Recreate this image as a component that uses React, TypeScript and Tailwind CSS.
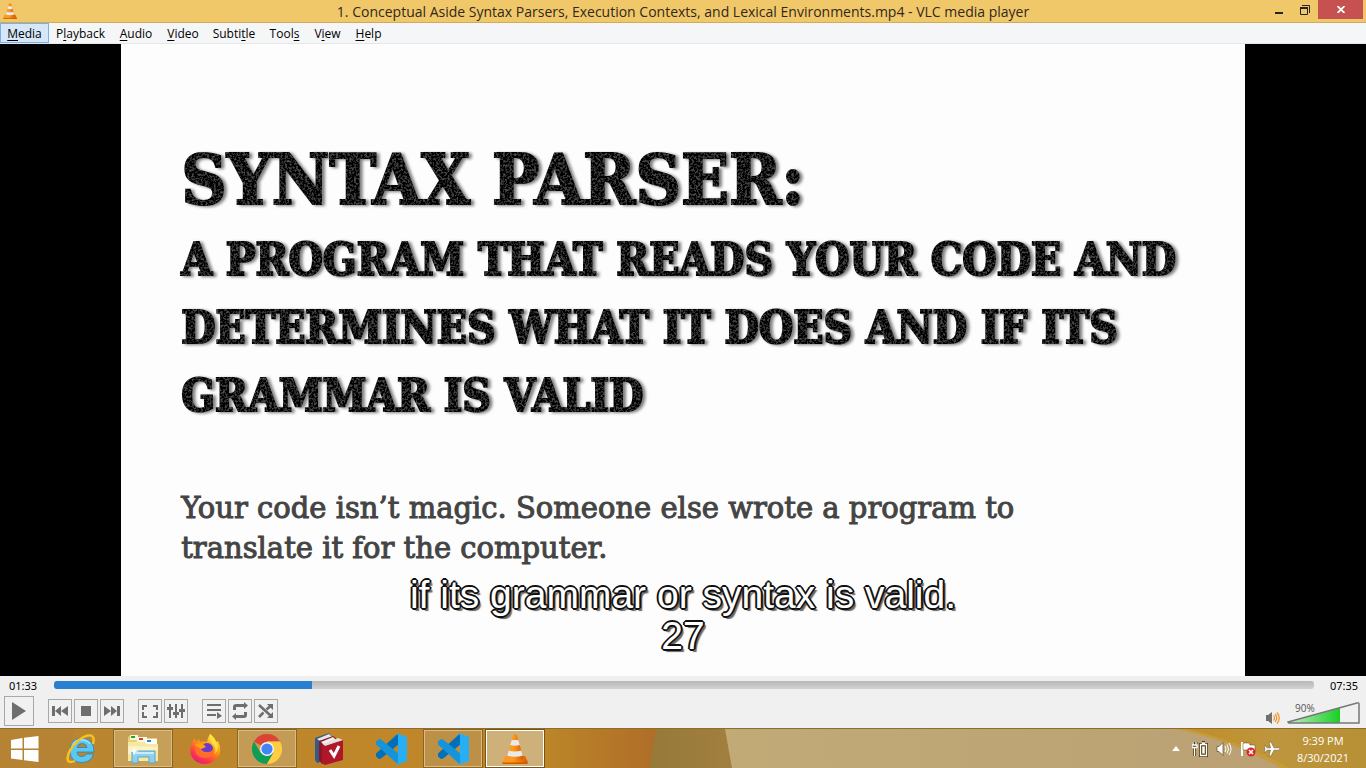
import type { ReactNode } from "react";

const menus = [
  { before: "", key: "M", after: "edia", width: "w-[49px]" },
  { before: "P", key: "l", after: "ayback", width: "w-[63px]" },
  { before: "", key: "A", after: "udio", width: "w-[48px]" },
  { before: "", key: "V", after: "ideo", width: "w-[46px]" },
  { before: "Subti", key: "t", after: "le", width: "w-[56px]" },
  { before: "Tool", key: "s", after: "", width: "w-[45px]" },
  { before: "V", key: "i", after: "ew", width: "w-[41px]" },
  { before: "", key: "H", after: "elp", width: "w-[41px]" },
];

function Cone({ className }: { className: string }) {
  return (
    <svg viewBox="0 0 26 30" className={className} aria-hidden="true">
      <defs>
        <linearGradient id="cone" x1="0" x2="1">
          <stop offset="0" stopColor="#f79a2a" />
          <stop offset=".4" stopColor="#ff9a1c" />
          <stop offset="1" stopColor="#d85a00" />
        </linearGradient>
      </defs>
      <path d="M3 22h20l3 6.5-1 1.500H1l-1-1.500z" fill="url(#cone)" />
      <path d="M0 28.500h26l-1 1.500H1z" fill="#c95c00" />
      <path d="M11 1q2-1.500 4 0l6.500 24q-8.500 4-17 0z" fill="url(#cone)" />
      <path d="M9.700 6h6.600l1.500 5q-4.800 1.500-9.600 0z" fill="#e9eaec" />
      <path d="M6.800 16.500q6.200 2 12.400 0l1.500 5q-7.700 2.500-15.400 0z" fill="#e9eaec" />
    </svg>
  );
}

function Explorer() {
  return (
    <svg viewBox="0 0 32 30" className="h-[30px] w-8">
      <path d="M1 4q0-2 2-2h7l2 2h18v23H1z" fill="#e9cf72" />
      <path d="M3 1h8v5H3z" fill="#f8f4d8" />
      <path d="M4 2h4v2H4z" fill="#2ca02c" />
      <path d="M10 3h10v5H10z" fill="#fbf8e4" />
      <path d="M12 4h4v2h-4z" fill="#d8402c" />
      <path d="M18 5h12v5H18z" fill="#fff" />
      <path d="M20 6h4v2h-4z" fill="#2488e0" />
      <path d="M1 8h16l3 2h11v17H1z" fill="#f6e8a4" />
      <path d="M1 12l30 1v3L1 20z" fill="#fbf3c4" />
      <path d="M5 17h23v12h-6v-6H11v6H5z" fill="#8fd0ee" stroke="#5ba4c8" />
      <path d="M6 18h21v2H6z" fill="#c8ecfb" />
      <path d="M7 12l1 4 4 1-4 1-1 4-1-4-4-1 4-1z" fill="#fff" />
    </svg>
  );
}

function Ie() {
  return (
    <svg viewBox="0 0 32 32" className="size-8">
      <path
        d="M29 19H12q.5 4.500 5 4.500 3 0 4.500-2.500h7q-2.500 8.500-11.500 8.500Q5 29.500 5 17.500 5 5.500 17 5.500 29 5.500 29 19zM12 14.500h10q-.6-4-4.800-4-4.300 0-5.200 4z"
        fill="#5cc8f2"
        stroke="#1c86c4"
        strokeWidth=".8"
      />
      <path d="M7 14q2-7 9-7.200 6 0 9 4" fill="none" stroke="#9be3fb" strokeWidth="1.500" />
      <path d="M28 11q2-7-2-8.500-5-1-12.500 5Q3 17 2.500 25q0 6 7.500 3" fill="none" stroke="#f6c324" strokeWidth="2.400" />
    </svg>
  );
}

function Firefox() {
  return (
    <svg viewBox="0 0 32 32" className="size-8">
      <defs>
        <linearGradient id="fire" x1=".8" y1="0" x2=".2" y2="1">
          <stop offset="0" stopColor="#fff44f" />
          <stop offset=".4" stopColor="#ff980e" />
          <stop offset=".75" stopColor="#ff3647" />
          <stop offset="1" stopColor="#e31587" />
        </linearGradient>
      </defs>
      <path d="M21 1q5 4 6 8l2-1q5 11-1 17-5 6-12 6-9 0-13-7Q-1 16 4 8l2-3 1 4 3-3 1 3q4-1 7 0 1-5 3-8z" fill="url(#fire)" />
      <circle cx="16.500" cy="17.500" r="7" fill="#7543d5" />
      <path d="M8 11q6-1 9 3l-5 2q2 3 6 3 5 0 7-4 0 10-9 10T6 17q0-3 2-6z" fill="#ff6d2d" />
      <path d="M12 16q2 3 6 3 5 0 6-4-1-4-5-5-5 0-3 4z" fill="#6a3bc9" />
      <path d="M5 12q5-3 9-1l3 3-5 2-3-2z" fill="#ffa016" />
      <path d="M21 1q-1 6 2 9 5 5 3 11 5-6 1-12-1-4-6-8z" fill="#ffe13a" />
    </svg>
  );
}

function Chrome() {
  return (
    <svg viewBox="0 0 30 30" className="size-[30px]">
      <path d="M15 15L2 7.500A15 15 0 0 1 28 7.500H15z" fill="#db4437" />
      <path d="M2 7.500A15 15 0 0 0 15 30l6.500-11.200L8.500 18.800z" fill="#0f9d58" />
      <path d="M28 7.500A15 15 0 0 1 15 30l6.500-11.200L15 7.500z" fill="#ffcd40" />
      <circle cx="15" cy="15" r="7" fill="#f4f4f4" />
      <circle cx="15" cy="15" r="5.600" fill="#4285f4" />
    </svg>
  );
}

function Books() {
  return (
    <svg viewBox="0 0 30 32" className="h-8 w-[30px]">
      <path d="M1 5l14-5 3 4v21L3 30l-2-3z" fill="#365a87" />
      <path d="M3 6l12-5 3 3L6 8z" fill="#e7e7e7" />
      <path d="M5 8l14-5 5 4v20L8 31l-3-4z" fill="#8c1622" />
      <path d="M7 9l12-5 3 3-12 5z" fill="#f0f0f0" />
      <path d="M8 12l3 1L29 7v20L11 32l-3-2z" fill="#b0172a" />
      <path d="M9 11l15-6 5 2-18 6z" fill="#e6dedc" />
      <path d="M16 17l4 6 5-10" fill="none" stroke="#fff" strokeWidth="3" />
    </svg>
  );
}

function Code() {
  return (
    <svg viewBox="0 0 32 32" className="size-8">
      <path d="M23 0.500L1 20.500v3L4 26l2-.5L24 11z" fill="#0070b8" />
      <path d="M23 31.500L1 11.500v-3L4 6l2 .5L24 21z" fill="#1594dc" />
      <path d="M23 .5L32 4v24l-9 3.500q-1 .5-2-.5 2 0 2-2V3q0-2-2-2 1-1 2-.5z" fill="#28aef5" />
    </svg>
  );
}

function Windows() {
  return (
    <svg viewBox="0 0 28 26" className="h-[26px] w-7" fill="#fff">
      <path d="M0 4l11.500-2v10.500H0zM13 1.700L27.500 0v12.500H13zM0 14h11.500v10L0 22.500zM13 14h14.500v12L13 24.300z" />
    </svg>
  );
}

const tasks: { name: string; icon: ReactNode; style: string }[] = [
  { name: "Internet Explorer", icon: <Ie />, style: "border-transparent" },
  { name: "File Explorer", icon: <Explorer />, style: "border-[#d9bb86] bg-[#c69f58] outline outline-[#8c641f]" },
  { name: "Firefox", icon: <Firefox />, style: "border-transparent" },
  { name: "Google Chrome", icon: <Chrome />, style: "border-[#d9bb86] bg-[#c39b55] outline outline-[#8c641f]" },
  { name: "Dictionary", icon: <Books />, style: "border-transparent" },
  { name: "Visual Studio Code", icon: <Code />, style: "border-transparent" },
  { name: "Visual Studio Code project", icon: <Code />, style: "border-[#d9bb86] bg-[#bc9147] outline outline-[#8c641f]" },
  { name: "VLC media player", icon: <Cone className="h-[30px] w-[26px]" />, style: "border-white bg-[#ceb07a] outline outline-[#79521a]" },
];

const groups: { name: string; icon: ReactNode }[][] = [
  [
    { name: "Previous", icon: <path d="M4 7h3v10H4zM13 7v10l-6-5zM20 7v10l-7-5z" /> },
    { name: "Stop", icon: <path d="M7 7h10v10H7z" /> },
    { name: "Next", icon: <path d="M4 7l7 5-7 5zM11 7l6 5-6 5zM17 7h3v10h-3z" /> },
  ],
  [
    { name: "Fullscreen", icon: <path d="M4 6h5v2H6v3H4zM15 6h5v5h-2V8h-3zM4 13h2v4h3v2H4zM18 13h2v6h-5v-2h3z" /> },
    { name: "Extended settings", icon: <path d="M5 5h2v3h2v3H7v8H5v-8H3V8h2zM11 5h2v8h2v3h-2v3h-2v-3H9v-3h2zM17 5h2v5h2v3h-2v6h-2v-6h-2v-3h2z" /> },
  ],
  [
    { name: "Playlist", icon: <path d="M5 5h14v2H5zM5 10h14v2H5zM5 15h9v2H5zM15 13l5 4-5 3z" /> },
    { name: "Loop", icon: <path d="M5 11V8q0-3 3-3h8V3l4 3.500-4 3.500V8H8v3zM19 13v3q0 3-3 3H8v2l-4-3.500L8 14v2h8v-3z" /> },
    { name: "Random", icon: <><path d="M5 6l12 11M5 18l4.500-4.500M12.500 10.500L17 6.500" fill="none" stroke="#6e6e6e" strokeWidth="2.500" /><path d="M13 5h6v6zM19 13v6h-6z" /></> },
  ],
];

const control = "flex items-center justify-center border border-[#a8a8a8] bg-[#f1f1f1]";
const slab = "font-bold [font-family:'DejaVu_Serif_Condensed','DejaVu_Serif',serif]";

export default function App() {
  return (
    <div className="flex h-screen flex-col overflow-hidden bg-[#f0f0f0] text-black [font-family:'Open_Sans','Noto_Sans',sans-serif]">
      <header className="flex h-[23px] shrink-0 border-b border-[#cfab5c] bg-[#f0c869]">
        <div className="w-[120px] pt-[3px] pl-[3px]">
          <Cone className="h-4 w-[14px]" />
        </div>
        <h1 className="flex-1 truncate text-center text-[14px] leading-6 text-[#30291b]">
          1. Conceptual Aside Syntax Parsers, Execution Contexts, and Lexical Environments.mp4 - VLC media player
        </h1>
        <div className="flex w-[120px] items-start justify-end">
          <button aria-label="Minimize" className="flex h-[19px] w-[26px] items-center justify-center">
            <svg viewBox="0 0 10 10" className="size-[10px]"><path d="M1 7h8v2H1z" fill="#242424" /></svg>
          </button>
          <button aria-label="Restore" className="flex h-[19px] w-[26px] items-center justify-center">
            <svg viewBox="0 0 10 10" className="size-[10px]" fill="none" stroke="#242424">
              <path d="M2 .5h7.500V8M.5 3v6.500h7V3M0 3h8" /><path d="M0 3h8" strokeWidth="2" />
            </svg>
          </button>
          <button aria-label="Close" className="mr-[3px] flex h-[19px] w-[45px] items-center justify-center bg-[#c75050]">
            <svg viewBox="0 0 8 7" className="h-[7px] w-2" stroke="#fff" strokeWidth="1.800"><path d="M.5 0l7 7M7.500 0l-7 7" /></svg>
          </button>
        </div>
      </header>

      <nav className="flex h-[21px] shrink-0 border-b border-[#e6e6e6] bg-[#f5f6f8]">
        {menus.map((m, i) => (
          <button
            key={m.before + m.key + m.after}
            className={`${m.width} h-5 border text-center text-[12px] leading-[20px] ${i === 0 ? "border-[#7ab0e6] bg-[#d5e7f8]" : "border-transparent"}`}
          >
            {m.before}<span className="underline underline-offset-2">{m.key}</span>{m.after}
          </button>
        ))}
      </nav>

      <main className="flex min-h-0 flex-1 justify-center bg-black">
        <section className="relative aspect-video h-full min-w-0 bg-[#fdfdfd] px-[60px] pt-[90px]">
          <svg width="0" height="0" className="absolute" aria-hidden="true">
            <filter id="worn" x="-2%" y="-5%" width="104%" height="110%">
              <feTurbulence type="fractalNoise" baseFrequency=".45" numOctaves="3" seed="4" result="noise" />
              <feColorMatrix in="noise" values="0 0 0 0 .08  0 0 0 0 .08  0 0 0 0 .08  3 0 0 0 -1.400" result="specks" />
              <feComposite in="specks" in2="SourceGraphic" operator="in" result="worn" />
              <feDropShadow in="SourceGraphic" dx="3" dy="1" stdDeviation="1.500" floodOpacity=".5" result="letters" />
              <feMerge><feMergeNode in="letters" /><feMergeNode in="worn" /></feMerge>
            </filter>
          </svg>
          <h2 className={`${slab} whitespace-nowrap text-black [-webkit-text-stroke:2px_#000] [filter:url(#worn)]`}>
            <span className="block text-[70px] leading-[92px]">SYNTAX PARSER:</span>
            <span className="block text-[44px] leading-[68px]">A PROGRAM THAT READS YOUR CODE AND</span>
            <span className="block text-[44px] leading-[68px]">DETERMINES WHAT IT DOES AND IF ITS</span>
            <span className="block text-[44px] leading-[68px]">GRAMMAR IS VALID</span>
          </h2>
          <p className="mt-[58px] whitespace-nowrap text-[29px] leading-10 text-[#444] [-webkit-text-stroke:1px_#444] [font-family:'DejaVu_Serif',serif]">
            Your code isn’t magic. Someone else wrote a program to<br />translate it for the computer.
          </p>
          <p className="absolute inset-x-0 bottom-5 text-center text-[39px] leading-[41px] text-white [font-family:'Liberation_Sans',sans-serif] [text-shadow:2px_0_#111,-2px_0_#111,0_2px_#111,0_-2px_#111,1px_1px_#111,-1px_1px_#111,1px_-1px_#111,-1px_-1px_#111,3px_3px_1px_#666]">
            if its grammar or syntax is valid.<br />27
          </p>
        </section>
      </main>

      <section aria-label="Playback controls" className="h-[52px] shrink-0 bg-[#f0f0f0]">
        <div className="flex h-5 items-center gap-4 pr-[7px] pl-[9px] text-[11px]">
          <span className="w-[29px] font-['Noto_Sans']">01:33</span>
          <input
            type="range"
            aria-label="Position"
            min="0"
            max="455"
            defaultValue="93"
            className="mb-[2px] h-2 min-w-0 flex-1 appearance-none rounded-[3px] bg-[linear-gradient(90deg,#2980d1_20.500%,transparent_20.500%),linear-gradient(#b8b8b8,#d2d2d2)] [&::-webkit-slider-thumb]:appearance-none [&::-webkit-slider-thumb]:opacity-0"
          />
          <span className="w-[29px] font-['Noto_Sans']">07:35</span>
        </div>
        <div className="flex h-[30px] items-center pl-1">
          <button aria-label="Play" className={`${control} size-[30px]`}>
            <svg viewBox="0 0 14 18" className="h-[18px] w-[14px]"><path d="M0 0l14 9-14 9z" fill="#6e6e6e" /></svg>
          </button>
          <div className="ml-[14px] flex gap-[14px]">
            {groups.map((g) => (
              <div key={g[0].name} className="flex gap-[2px]">
                {g.map((b) => (
                  <button key={b.name} aria-label={b.name} className={`${control} size-6`}>
                    <svg viewBox="0 0 24 24" className="size-6 shrink-0" fill="#6e6e6e">{b.icon}</svg>
                  </button>
                ))}
              </div>
            ))}
          </div>
          <div className="mr-[6px] ml-auto flex items-end gap-[7px]">
            <button aria-label="Mute">
              <svg viewBox="0 0 14 12" className="h-3 w-[14px]" fill="none">
                <path d="M0 3h2l4-3v12L2 9H0z" fill="#707070" />
                <path d="M7.500 3.500q2 2.500 0 5M9 2q3.500 4 0 8M11 .5q4.500 5.500 0 11" stroke="#f09022" strokeWidth="1.200" />
              </svg>
            </button>
            <div className="relative pt-1">
              <svg viewBox="0 0 73 22" className="block h-[22px] w-[73px]">
                <defs><linearGradient id="volume"><stop stopColor="#c4ecc4" /><stop offset="1" stopColor="#17cf27" /></linearGradient></defs>
                <path d="M1 20L53 6v15H1z" fill="url(#volume)" />
                <path d="M1 20L70 1q2-.5 2 1v19H2z" fill="none" stroke="#777" strokeWidth="1.500" />
              </svg>
              <span className="absolute top-1 left-2 text-[10px] leading-3 text-[#555]">90%</span>
            </div>
          </div>
        </div>
      </section>

      <footer className="relative flex h-10 shrink-0 border-t border-[#8e6c2e] bg-[#bd852b]">
        <svg viewBox="0 0 1366 40" preserveAspectRatio="none" className="absolute inset-0 size-full" aria-hidden="true">
          <defs>
            <linearGradient id="amber"><stop stopColor="#b98532" /><stop offset=".6" stopColor="#bf8729" /><stop offset=".83" stopColor="#bb8528" /><stop offset="1" stopColor="#af6d28" /></linearGradient>
            <linearGradient id="olive"><stop stopColor="#967a3a" /><stop offset="1" stopColor="#a17f3f" /></linearGradient>
            <linearGradient id="sand"><stop stopColor="#c2aa77" /><stop offset="1" stopColor="#b99f73" /></linearGradient>
            <linearGradient id="gold"><stop stopColor="#c38d26" /><stop offset=".5" stopColor="#bd963d" /><stop offset="1" stopColor="#b78f35" /></linearGradient>
          </defs>
          <path d="M0 0h660l-8 40H0z" fill="url(#amber)" />
          <path d="M0 0h74l-10 40H0z" fill="#b68334" />
          <path d="M656 0h69l7 40h-82z" fill="url(#olive)" />
          <path d="M725 0h641v40H732z" fill="url(#sand)" />
          <path d="M1180 0h186v40h-85q-46-27-101-40z" fill="url(#gold)" />
          <path d="M1176 0h12q58 15 101 40h-8q-46-28-105-40z" fill="#c99b38" />
        </svg>
        <button aria-label="Start" className="relative flex w-[52px] items-center justify-center pr-[2px]"><Windows /></button>
        <nav aria-label="Taskbar" className="relative flex gap-1 py-px">
          {tasks.map((t) => (
            <button key={t.name} aria-label={t.name} className={`flex w-[58px] items-center justify-center border ${t.style}`}>{t.icon}</button>
          ))}
        </nav>
        <div className="relative ml-auto flex items-center gap-2 pr-3 text-white">
          <button aria-label="Show hidden icons" className="mr-1"><svg viewBox="0 0 8 5" className="h-[5px] w-2"><path d="M0 5l4-5 4 5z" fill="#fff" /></svg></button>
          <svg viewBox="0 0 16 16" className="size-4" fill="none">
            <path d="M0 4.500h5M1 1v3M4 1v3M2.500 6v9M8.500 3.500h6v11h-6zM10 1.500h3" stroke="#4c3c1a" strokeWidth="3" />
            <path d="M0 4h5v2.500H0zM1 1v3M4 1v3M2.500 6v9M8.500 3.500h6v11h-6zM10 2h3" stroke="#fff" strokeWidth="1.300" />
            <path d="M10.500 6h2v6h-2z" fill="#fff" />
          </svg>
          <svg viewBox="0 0 16 16" className="size-4" fill="none" stroke="#fff">
            <path d="M1 5.500h2l4-4v13l-4-4H1z" fill="#fff" stroke="#5d4a22" strokeWidth=".7" />
            <path d="M9 5q2 3 0 6M11 3.500q3 4.500 0 9M13 2q4 6 0 12" />
          </svg>
          <svg viewBox="0 0 16 16" className="size-4">
            <path d="M1 1h2v14H1z" fill="#fff" /><path d="M3 2h6l1 2h5v7H9L8 9H3z" fill="#fff" stroke="#5d4a22" strokeWidth=".5" />
            <circle cx="11" cy="11" r="4.500" fill="#d9272e" /><path d="M9 9l4 4M13 9l-4 4" stroke="#fff" strokeWidth="1.500" />
          </svg>
          <svg viewBox="0 0 16 16" className="size-4"><path d="M16 8q0 1.200-2 1.200h-4L7 15H5l1.500-5.800H3L1.500 11H0l1-3-1-3h1.500L3 6.800h3.500L5 1h2l3 5.800h4Q16 6.800 16 8z" fill="#fff" stroke="#5d4a22" strokeWidth=".5" /></svg>
          <time className="ml-1 w-[62px] text-center text-[11px] leading-[17px]">9:39 PM<br />8/30/2021</time>
        </div>
      </footer>
    </div>
  );
}
